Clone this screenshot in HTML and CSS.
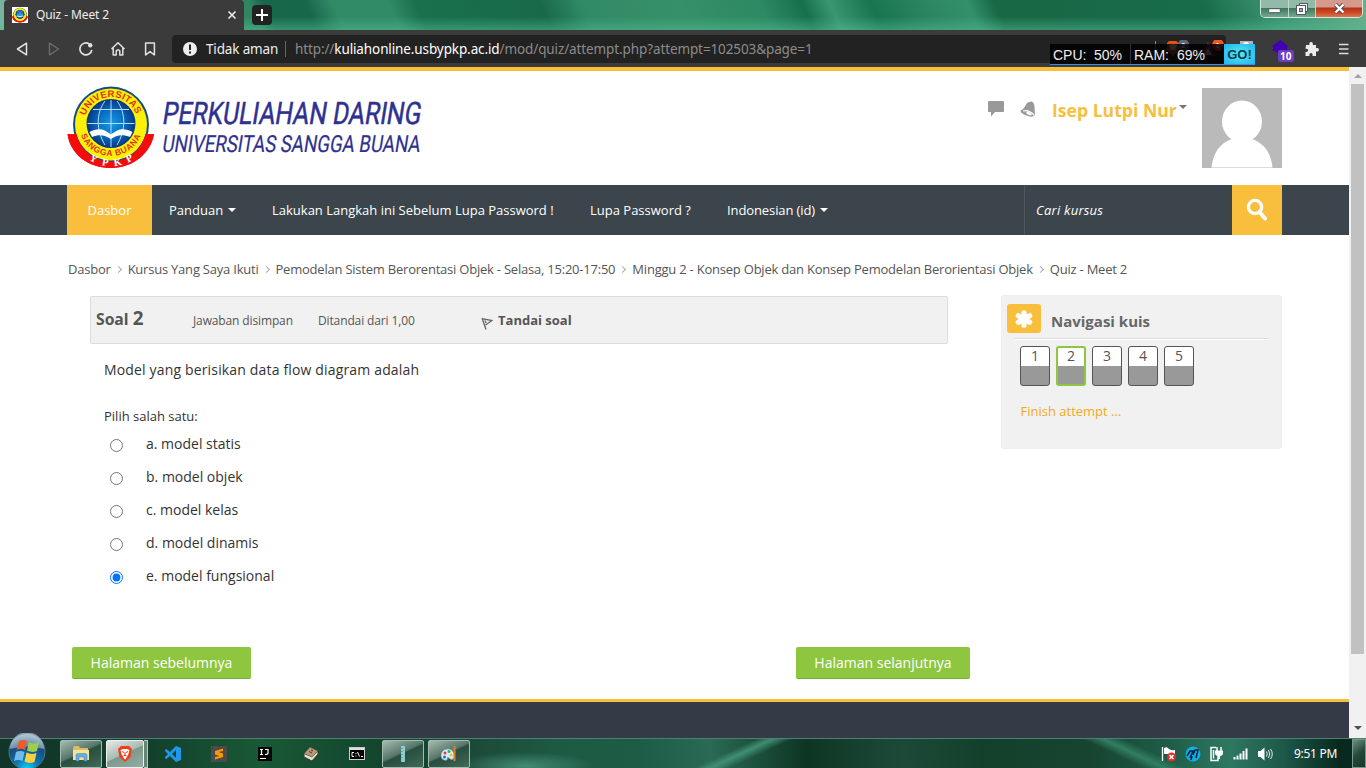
FILE: index.html
```html
<!DOCTYPE html>
<html lang="id">
<head>
<meta charset="utf-8">
<title>Quiz - Meet 2</title>
<link rel="stylesheet" href="styles.css">
</head>
<body>
<svg class="defs" width="0" height="0">
  <defs>
    <radialGradient id="globe"><stop offset="0" stop-color="#139be5"/><stop offset=".55" stop-color="#0870c4"/><stop offset="1" stop-color="#073a8a"/></radialGradient>
    <path id="arcTop" d="M18.300 30.700A27 27 0 0 1 69.700 30.700"/>
    <path id="arcBottom" d="M13.900 49.900A32 32 0 0 0 74.100 49.900"/>
    <path id="arcRibbon" d="M22 74.600A41 41 0 0 0 68 73.600"/>
    <symbol id="crest" viewBox="0 0 88 84">
      <path d="M.5 49 H13 C15 63 28 73 44 73 C59 73 71 63 74 49 H87 C84 68 66 83 44 83 C20 83 3 68 .5 49Z" fill="#f50b0c"/>
      <circle cx="44" cy="39.500" r="38" fill="#174a86"/>
      <circle cx="44" cy="39.500" r="36" fill="#fcf008"/>
      <path d="M.5 49 H9.500 C13 65 27 76.500 44 76.500 C60 76.500 74 66 78.500 49 H87 C84 68 66 83 44 83 C20 83 3 68 .5 49Z" fill="#f50b0c"/>
      <circle cx="44" cy="38.500" r="24.500" fill="#0a3c80"/>
      <circle cx="44" cy="38.500" r="23.500" fill="url(#globe)"/>
      <g fill="none" stroke="#b9def2" stroke-width="1"><path d="M44 15V62M20.500 38.500H67.500M26 24.500H62M38 16C29 28 29 45 38 60M50 16C59 28 59 45 50 60"/></g>
      <path d="M22.500 47 C31 42 38 44 44 49.500 C50 44 57 42 65.500 47 L63 52 C56 49 49 50 44 54 C38 50 32 49 25 52Z" fill="#fff"/>
    </symbol>
  </defs>
</svg>

<header class="titlebar">
  <div class="tab">
    <svg class="favicon" width="16" height="16" viewBox="0 0 88 88"><rect width="88" height="88" fill="#fff"/><use href="#crest" width="88" height="88"/></svg>
    <span class="tab-title">Quiz - Meet 2</span>
    <svg width="10" height="10" viewBox="0 0 10 10"><path d="M1.500 1.500L8.500 8.500M8.500 1.500L1.500 8.500" stroke="#eee" stroke-width="1.600"/></svg>
  </div>
  <div class="newtab"><svg width="12" height="12" viewBox="0 0 12 12"><path d="M6 0V12M0 6H12" stroke="#fff" stroke-width="2"/></svg></div>
  <div class="winbtns">
    <span class="wb"><svg class="min" width="13" height="6" viewBox="0 0 13 6"><rect x=".7" y=".7" width="11.600" height="4" rx="1" fill="#fff" stroke="#4f5563"/></svg></span>
    <span class="wb wb-max"><svg width="12" height="12" viewBox="0 0 12 12"><rect x="3.500" y=".5" width="8" height="8" fill="#eee" stroke="#555b68"/><rect x=".5" y="2.500" width="9" height="9" fill="#fff" stroke="#555b68"/><rect x="3.500" y="5.500" width="3" height="3" fill="#aaa" stroke="#555b68"/></svg></span>
    <span class="wb wb-close"><svg width="13" height="11" viewBox="0 0 13 11"><path d="M2.500 1.500L10.500 9.500M10.500 1.500L2.500 9.500" stroke="#574551" stroke-width="4.200"/><path d="M2.500 1.500L10.500 9.500M10.500 1.500L2.500 9.500" stroke="#fff" stroke-width="2.400"/></svg></span>
  </div>
</header>

<div class="toolbar">
  <div class="tools">
    <svg width="16" height="16" viewBox="0 0 16 16"><path d="M12.500 2.200L3.500 8L12.500 13.800Z" fill="none" stroke="#e2e2e2" stroke-width="1.500" stroke-linejoin="round"/></svg>
    <svg width="16" height="16" viewBox="0 0 16 16"><path d="M3.500 2.200L12.500 8L3.500 13.800Z" fill="none" stroke="#6b6b6b" stroke-width="1.400" stroke-linejoin="round"/></svg>
    <svg width="16" height="16" viewBox="0 0 16 16"><path d="M11 2.800A6 6 0 1 0 13.800 9" fill="none" stroke="#e2e2e2" stroke-width="1.700"/><circle cx="12.200" cy="4.200" r="2.200" fill="#e2e2e2"/></svg>
    <svg width="16" height="16" viewBox="0 0 16 16"><path d="M1.500 8L8 1.800L14.500 8M3.200 7V14H6.200V10Q8 7.500 9.800 10V14H12.800V7" fill="none" stroke="#e2e2e2" stroke-width="1.500" stroke-linejoin="round"/></svg>
    <svg width="16" height="16" viewBox="0 0 16 16"><path d="M3.600 2H12.400V14L8 10.600L3.600 14Z" fill="none" stroke="#e2e2e2" stroke-width="1.500" stroke-linejoin="round"/></svg>
  </div>
  <div class="address">
    <svg width="14" height="14" viewBox="0 0 14 14"><circle cx="7" cy="7" r="7" fill="#eee"/><path d="M7 2.500V8M7 9.500V11.500" stroke="#222" stroke-width="2"/></svg>
    <span class="insecure">Tidak aman</span>
    <span class="sep"></span>
    <span class="url">http://<b>kuliahonline.usbypkp.ac.id</b>/mod/quiz/attempt.php?attempt=102503&amp;page=1</span>
    <div class="shields">
      <span class="sep short"></span>
      <svg width="24" height="18" viewBox="0 0 24 18"><path d="M1 3L3 1H10L13 3V10L7 16L1 10Z" fill="#e9500c"/><path d="M3 5L7 4L11 5L9 10H5Z" fill="#fff"/><circle cx="17.500" cy="5" r="5.800" fill="#62677a"/><text x="15" y="8" class="badge-text">2</text></svg>
      <svg width="24" height="18" viewBox="0 0 24 18"><path d="M6 2L14 16H-2Z" fill="#8d2852"/><path d="M6 8L10 15H2Z" fill="#ddd"/><circle cx="16" cy="5" r="6" fill="#fb542b"/><text x="13.500" y="8" class="badge-text">1</text></svg>
    </div>
  </div>
  <div class="extensions">
    <svg width="16" height="16" viewBox="0 0 16 16"><rect x="1" width="13" height="14" fill="#aeb4bd"/><circle cx="7" cy="4" r="3" fill="#fff"/></svg>
    <svg class="stack-ext" width="24" height="24" viewBox="0 0 24 24"><path d="M9.500 1L17 7L15.500 9L17 11L9 15L1 11L3 9L1 7Z" fill="#4300ae"/><rect x="7" y="11" width="16" height="12" rx="2" fill="#6d3cc4"/><text x="9" y="21" class="ten">10</text></svg>
    <svg class="puzzle" width="16" height="16" viewBox="0 0 16 16"><path d="M2 4H5.500C4 0 10 0 8.800 4H12V7.200C16 6 16 11.500 12 10.500V15H8.500C9.500 11 4.500 11 5.500 15H1.500V11C5 11.500 5 7 1.500 8Z" fill="#ececec"/></svg>
    <svg class="menu" width="10" height="14" viewBox="0 0 10 14"><path d="M0 2.500H9.500M0 7H9.500M0 11.500H9.500" stroke="#ddd" stroke-width="1.500"/></svg>
  </div>
</div>

<div class="monitor"><span class="cell cpu"><i>CPU:</i><i>50%</i></span><span class="cell ram"><i>RAM:</i><i>69%</i></span><span class="go">GO!</span></div>

<div class="browser">
  <div class="page">
    <div class="masthead">
      <svg class="logo" width="370" height="90" viewBox="0 0 370 90">
        <use href="#crest" width="88" height="84"/>
        <text class="crest-ring"><textPath href="#arcTop" textLength="66">UNIVERSITAS</textPath></text>
        <text class="crest-ring small"><textPath href="#arcBottom" textLength="77">SANGGA BUANA</textPath></text>
        <text class="crest-yp"><textPath href="#arcRibbon" textLength="47">YPKP</textPath></text>
        <text class="logo-main" transform="translate(94.500 39.300) skewX(-9)" textLength="258.500" lengthAdjust="spacingAndGlyphs">PERKULIAHAN DARING</text>
        <text class="logo-sub" transform="translate(94.500 67.300) skewX(-9)" textLength="258" lengthAdjust="spacingAndGlyphs">UNIVERSITAS SANGGA BUANA</text>
      </svg>
      <div class="user">
        <svg class="chat" width="16" height="16" viewBox="0 0 16 16"><path d="M1 0H15Q16 0 16 1V10Q16 11 15 11H7L3 15.500V11H1Q0 11 0 10V1Q0 0 1 0Z" fill="#999"/></svg>
        <svg class="bell" width="17" height="17" viewBox="0 0 17 17"><path d="M7 2Q10 0 12 .5Q14.500 2 14.500 6L15 14Q12 17 6.500 14.500Q0 12 .5 9.500Q4 8 5.500 4.500Z" fill="#999"/><path d="M3 10Q9 8.500 14 14" fill="none" stroke="#fff" stroke-width="1.200"/><ellipse cx="9" cy="12.500" rx="3" ry="1.400" transform="rotate(25 9 12.500)" fill="#fff"/></svg>
        <span class="username">Isep Lutpi Nur</span><i class="caret dark"></i>
        <svg class="avatar" width="80" height="80" viewBox="0 0 80 80"><rect width="80" height="80" fill="#bababa"/><ellipse cx="40" cy="33.500" rx="20" ry="21" fill="#fff"/><path d="M9.500 79.500C11 65 18 55 30 51H50C62 55 69 65 70.500 79.500Z" fill="#fff"/></svg>
      </div>
    </div>
    <nav class="mainnav">
      <a class="active">Dasbor</a>
      <a class="n1"><span>Panduan</span><i class="caret"></i></a>
      <a class="n2"><span>Lakukan Langkah ini Sebelum Lupa Password !</span></a>
      <a class="n3"><span>Lupa Password ?</span></a>
      <a class="n4"><span>Indonesian (id)</span><i class="caret"></i></a>
      <div class="search">Cari kursus</div>
      <div class="search-btn"><svg width="22" height="24" viewBox="0 0 22 24"><circle cx="9" cy="9" r="6.600" fill="none" stroke="#fff" stroke-width="3.400"/><path d="M13.500 14L19 20.500" stroke="#fff" stroke-width="4" stroke-linecap="round"/></svg></div>
    </nav>
    <div class="crumbs">
      <span>Dasbor</span><i></i><span>Kursus Yang Saya Ikuti</span><i></i><span>Pemodelan Sistem Berorentasi Objek - Selasa, 15:20-17:50</span><i></i><span>Minggu 2 - Konsep Objek dan Konsep Pemodelan Berorientasi Objek</span><i></i><span>Quiz - Meet 2</span>
    </div>
    <main class="content">
      <section class="question">
        <div class="info">
          <h3>Soal <b>2</b></h3>
          <span class="state">Jawaban disimpan</span>
          <span class="grade">Ditandai dari 1,00</span>
          <svg class="flag" width="12" height="14" viewBox="0 0 12 14"><path d="M1 1L5 12.500M2 1.800L11 3.500L4.500 8M4 3.500L5 6" fill="none" stroke="#666" stroke-width="1.300"/></svg>
          <strong>Tandai soal</strong>
        </div>
        <p class="qtext">Model yang berisikan data flow diagram adalah</p>
        <p class="prompt">Pilih salah satu:</p>
        <label class="answer"><input type="radio" name="q"><span>a. model statis</span></label>
        <label class="answer"><input type="radio" name="q"><span>b. model objek</span></label>
        <label class="answer"><input type="radio" name="q"><span>c. model kelas</span></label>
        <label class="answer"><input type="radio" name="q"><span>d. model dinamis</span></label>
        <label class="answer"><input type="radio" name="q" checked><span>e. model fungsional</span></label>
        <div class="buttons"><button class="prev">Halaman sebelumnya</button><button class="next">Halaman selanjutnya</button></div>
      </section>
      <aside class="block">
        <div class="block-head">
          <span class="block-icon"><svg width="18" height="18" viewBox="0 0 18 18"><path d="M9 2.800V15.200M3.300 5.800L14.700 12.200M14.700 5.800L3.300 12.200" stroke="#fff" stroke-width="5.200" stroke-linecap="round"/></svg></span>
          <h2>Navigasi kuis</h2>
        </div>
        <div class="rule"></div>
        <div class="qn"><a>1</a><a class="current">2</a><a>3</a><a>4</a><a>5</a></div>
        <a class="finish">Finish attempt ...</a>
      </aside>
    </main>
    <footer class="footer"></footer>
  </div>
  <div class="scrollbar"><i class="up"></i><div class="thumb"></div><i class="down"></i></div>
</div>

<div class="taskbar">
  <svg class="orb" width="40" height="36" viewBox="0 0 40 36">
    <defs><radialGradient id="og" cx=".5" cy="1" r=".95"><stop offset="0" stop-color="#19d7fb"/><stop offset=".35" stop-color="#0a75b5"/><stop offset=".75" stop-color="#1b4a78"/><stop offset="1" stop-color="#86a7bd"/></radialGradient></defs>
    <circle cx="20" cy="18.500" r="18" fill="url(#og)" stroke="#51758a"/><path d="M3 16A17 17 0 0 1 37 16Q20 11 3 16Z" fill="#d8e8f1" opacity=".45"/>
    <path d="M12 8Q16 6 20 8L18 17Q14 14.500 9.500 17Z" fill="#f0592b"/><path d="M22 9Q27 12 32 9L30 18Q25 20 20 17.500Z" fill="#9bd04a"/><path d="M9 19Q13 17 17.500 19L15.500 28Q11 26 7 28Z" fill="#71bdea"/><path d="M19.500 19.500Q24 22 29.500 20L27.500 29Q22 31 17.500 28.500Z" fill="#fbd13f"/>
  </svg>
  <div class="task win explorer"><svg width="18" height="18" viewBox="0 0 18 18"><path d="M1 3L2 1H7L8 3H16V15H1Z" fill="#d9bd60"/><path d="M1 5H17V15H1Z" fill="#f6e39b"/><path d="M4 16V10Q4 8.500 6 8.500H13Q15 8.500 15 10V16H12V12H7V16Z" fill="#64afe0" stroke="#3b7fae" stroke-width=".5"/></svg></div>
  <div class="task win brave"><svg width="14" height="16" viewBox="0 0 14 16"><path d="M3 0H11L14 3L12.500 11L7 16L1.500 11L0 3Z" fill="#f73b16"/><path d="M2.500 4L5 3H9L11.500 4L10.500 8L8 12.500L7 13.500L6 12.500L3.500 8Z" fill="#fff"/><path d="M4 5.500L6 6.500M10 5.500L8 6.500M7 6V9M5.500 10L7 9L8.500 10" stroke="#f73b16"/></svg></div>
  <div class="task stack"></div>
  <div class="task icon"><svg width="16" height="16" viewBox="0 0 16 16"><path d="M11 0L16 2V14L11 16L5 10L1.500 13L0 12V11L3 8L0 5V4L1.500 3L5 6Z M11 4L7 8L11 12Z" fill="#2197e8" fill-rule="evenodd"/></svg></div>
  <div class="task icon"><svg width="16" height="16" viewBox="0 0 16 16"><rect width="16" height="16" fill="#4b4b4b"/><path d="M12 2.500L4 5V8.500L8.500 10L4 11V13.500L12 11V7.500L7.500 6L12 5Z" fill="#ff9800"/></svg></div>
  <div class="task icon"><svg width="14" height="14" viewBox="0 0 14 14"><rect width="14" height="14" fill="#050505"/><path d="M2 2.500H5M3.500 2.500V7.500M2 7.500H5M7 2.500H10V6Q10 7.500 7 7.500M2 11.500H8" fill="none" stroke="#fff" stroke-width="1.200"/></svg></div>
  <div class="task icon"><svg width="16" height="16" viewBox="0 0 16 16"><path d="M7 1L15 5V8L9 15L1 11V8Z" fill="#e8dfd5" stroke="#40352c"/><path d="M7 1L15 5L9 11L1 7.500Z" fill="#b39a7a" stroke="#4b3d30" stroke-width=".7"/><path d="M6 5.500L9 7M8 4L10 5" stroke="#4b3d30"/></svg></div>
  <div class="task icon"><svg width="16" height="14" viewBox="0 0 16 14"><rect x=".5" y=".5" width="15" height="12" fill="#000" stroke="#ccc"/><path d="M1 2H15" stroke="#ddd" stroke-width="2"/><path d="M5 5.500H3V9.500H5M7 6V7M7 8.500V9.500M8.500 5L10.500 9.500M12 9.500H14" fill="none" stroke="#fff"/></svg></div>
  <div class="task win w3"><svg width="4" height="16" viewBox="0 0 4 16"><rect width="4" height="16" fill="#8ccbd0"/><path d="M0 2.500H1.500M0 5.500H1.500M0 8.500H1.500M0 11.500H1.500" stroke="#3f8790" stroke-width=".7"/></svg></div>
  <div class="task win w4"><svg width="16" height="16" viewBox="0 0 16 16"><path d="M7 3C12 3 14 8 13 12Q11 15 8 12Q6 10 6 14Q0 15 0 9Q1 3 7 3Z" fill="#d6edf7" stroke="#75a8c2" stroke-width=".7"/><circle cx="4" cy="7" r="1.500" fill="#e43e34"/><circle cx="8" cy="5.500" r="1.500" fill="#42aa49"/><circle cx="3.500" cy="11" r="1.500" fill="#2c69ce"/><circle cx="10" cy="9" r="1.500" fill="#f1bf27"/><path d="M13.500 0V15" stroke="#e08128" stroke-width="2"/></svg></div>
  <div class="tray">
    <svg width="16" height="16" viewBox="0 0 16 16"><path d="M1.500 1V15" stroke="#fff" stroke-width="1.300"/><path d="M3 2Q6 0 8 3Q11 5 14 4V10Q9 11 7 8H3Z" fill="#fff"/><circle cx="10.500" cy="11" r="4.500" fill="#db3125"/><path d="M8.500 9L12.500 13M12.500 9L8.500 13" stroke="#fff" stroke-width="1.500"/></svg>
    <svg width="16" height="16" viewBox="0 0 16 16"><circle cx="8" cy="8" r="7.500" fill="#0caee8"/><path d="M2 10L5 5H8L5 12M8 9L10 4H13L11 12M7 10L6 14" fill="none" stroke="#08253d" stroke-width="1.500"/></svg>
    <svg width="16" height="16" viewBox="0 0 16 16"><path d="M7 1.500H2V14.500H9V10" fill="none" stroke="#fff" stroke-width="1.500"/><path d="M4.500 4V12.500" stroke="#fff" stroke-width="1.500"/><path d="M8 1V5M12 1V5" stroke="#fff" stroke-width="1.500"/><path d="M6 4.500H14V7Q14 9.500 11 10V13H9V10Q6 9.500 6 7Z" fill="#fff"/></svg>
    <svg width="16" height="16" viewBox="0 0 16 16"><path d="M1.500 11V13.500M4.500 9.500V13.500M7.500 7.500V13.500M10.500 5V13.500M13.500 2.500V13.500" stroke="#fff" stroke-width="2"/></svg>
    <svg width="16" height="16" viewBox="0 0 16 16"><path d="M1 5H3.500L7.500 1.500V14.500L3.500 11H1Z" fill="#fff"/><path d="M9.500 5.500Q11 8 9.500 10.500M11.500 4Q14 8 11.500 12M13.500 3Q17 8 13.500 13" fill="none" stroke="#e4eeea" stroke-width="1"/></svg>
    <time>9:51 PM</time>
    <span class="desktop-btn"></span>
  </div>
</div>
</body>
</html>
```
FILE: styles.css
```css
* { box-sizing: border-box; }
html, body { margin: 0; height: 100%; overflow: hidden; }
body { width: 1366px; height: 768px; display: flex; flex-direction: column; position: relative; font-family: "Open Sans", "Noto Sans", sans-serif; font-size: 13px; color: #555; background: #fff; }
svg { display: block; flex: none; }
.defs { position: absolute; }
i { font-style: normal; }

.titlebar { height: 30px; flex: none; display: flex; padding-left: 4px; background: linear-gradient(180deg, transparent 55%, rgba(82,190,147,.5)), linear-gradient(65deg, #7ab6a0 0, #2f8560 19%, #17674a 20%, #17674a 23%, #328b67 25%, #328b67 29%, #19704c 31%, #18694a 40%, #318a66 43%, #369069 50%, #2d8963 56%, #17704c 59%, #3a9670 61%, #197450 64%, #2d8662 68%, #33906a 71%, #186745 73%, #186c4a 88%, #3b9271 93%, #6dae8c 100%); }
.tab { width: 240px; height: 30px; background: #3b3b3b; border-radius: 4px 4px 0 0; display: flex; align-items: center; padding: 0 7px 0 8px; }
.tab-title { font: 12px/16px "Noto Sans", sans-serif; color: #eee; margin-left: 8px; flex: 1; letter-spacing: -.1px; }
.newtab { width: 20px; height: 20px; margin: 5px 0 0 8px; background: #222; border-radius: 4px; display: grid; place-items: center; }
.winbtns { margin-left: auto; margin-right: 3px; width: 103px; height: 18px; display: flex; border: 1px solid #d2e8df; border-top: 0; border-radius: 0 0 5px 5px; overflow: hidden; }
.wb { width: 28px; display: grid; place-items: center; background: linear-gradient(#93b9a8 45%, #3e795e 50%, #76a890); border-right: 1px solid #bfd9ce; }
.min { margin-top: 4px; }
.wb-max { width: 27px; }
.wb-close { width: 46px; border: 0; background: linear-gradient(#d69a8c 40%, #b73419 48%, #cf4a24 75%, #d87a57); }

.toolbar { height: 37px; flex: none; background: #3b3b3b; display: flex; align-items: center; padding: 0 17px 0 14px; }
.tools { display: flex; gap: 16px; width: 158px; }
.address { width: 1054px; height: 28px; background: #222; border-radius: 4px; display: flex; align-items: center; padding-left: 11px; font: 13.500px/20px "Noto Sans", sans-serif; white-space: nowrap; }
.insecure { color: #eee; width: 72px; margin-left: 9px; letter-spacing: -.15px; }
.sep { width: 1px; height: 16px; background: #666; margin: 0 9px 0 7px; }
.sep.short { background: #888; margin: 0 10px 0 0; }
.url { color: #8b8b8b; letter-spacing: -.11px; }
.url b { color: #fff; font-weight: 400; }
.shields { margin-left: auto; display: flex; align-items: center; gap: 0; }
.shields svg + svg { margin-left: 12px; }
.badge-text { font: bold 8px "Liberation Sans", sans-serif; fill: #fff; }
.extensions { flex: 1; display: flex; align-items: center; padding-left: 13px; }
.stack-ext { margin: 4px 0 0 16px; }
.puzzle { margin-left: 9px; }
.menu { margin-left: auto; }
.ten { font: bold 10px "Open Sans", sans-serif; fill: #fff; }

.monitor { position: absolute; z-index: 2; left: 1050px; top: 44px; width: 205px; height: 21px; display: flex; background: rgba(0,0,0,.85); border-bottom: 1px solid #2e91ed; color: #eee; font: 14px/23px "Liberation Sans", sans-serif; }
.cell { display: flex; justify-content: space-between; }
.cpu { width: 81px; padding: 0 8px 0 3px; border-right: 1px solid #333; }
.ram { width: 93px; padding: 0 19px 0 3px; }
.go { width: 31px; text-align: center; font-weight: bold; color: #083850; background: radial-gradient(#55eaf0, #1fb5ef); font-size: 13px; line-height: 22px; }

.browser { flex: 1; min-height: 0; display: flex; }
.page { width: 1349px; border-top: 4px solid #f9be3b; display: flex; flex-direction: column; }
.masthead { height: 114px; flex: none; padding: 14px 67px 0 67px; display: flex; justify-content: space-between; }
.crest-ring { font: bold 9.500px "Liberation Sans", sans-serif; fill: #e0301a; }
.crest-ring.small { font-size: 8.500px; }
.crest-yp { font: bold 10.500px "Liberation Serif", serif; fill: #fff; }
.logo-main { font: 31px Roboto, sans-serif; fill: #2e3190; stroke: #2e3190; stroke-width: .5px; }
.logo-sub { font: 23.500px Roboto, sans-serif; fill: #2e3190; stroke: #2e3190; stroke-width: .2px; }
.user { display: flex; align-items: flex-start; padding-top: 3px; }
.chat { margin: 13px 0 0; }
.bell { margin: 13px 0 0 16px; }
.username { width: 125px; margin: 9px 3px 0 15px; font-size: 17.600px; line-height: 26px; font-weight: 700; color: #f9be3b; white-space: nowrap; }
.caret { width: 8px; border: 4px solid transparent; border-top-color: #fff; border-bottom: 0; margin-left: 5px; }
.caret.dark { border-top-color: #777; margin: 17px 15px 0 -1px; }
.mainnav { height: 50px; flex: none; background: #3b454b; display: flex; padding-left: 67px; color: #fff; align-items: center; white-space: nowrap; }
.mainnav a { display: flex; align-items: center; }
.mainnav .active { width: 85px; height: 50px; justify-content: center; background: #f9be3b; }
.mainnav .n1 { width: 103px; margin-left: 17px; }
.n2 { width: 318px; }
.n3 { width: 137px; }
.n4 { width: 297px; letter-spacing: -.1px; }
.search { width: 208px; height: 50px; line-height: 50px; padding-left: 11px; border-left: 1px solid #4d575c; font-style: italic; letter-spacing: .25px; }
.search-btn { width: 50px; height: 50px; display: grid; place-items: center; background: #f9be3b; }

.crumbs { height: 60px; flex: none; padding: 9px 0 0 68px; line-height: 50px; display: flex; white-space: nowrap; letter-spacing: -.22px; }
.crumbs i { width: 5px; height: 5px; margin: 23px 7px 0 5px; border: solid #aaa; border-width: 1px 1px 0 0; transform: rotate(45deg); }
.content { height: 404px; flex: none; display: flex; align-items: flex-start; padding-left: 67px; }
.question { width: 934px; padding-top: 1px; color: #333; }
.info { width: 858px; height: 48px; margin-left: 23px; background: #f1f1f1; border: 1px solid #dcdcdc; border-radius: 2px; display: flex; align-items: center; padding-left: 5px; color: #555; white-space: nowrap; }
.info h3 { margin: 0; width: 97px; font-size: 15.700px; line-height: 24px; font-weight: 700; padding-bottom: 3px; }
.info h3 b { font-size: 18.800px; font-weight: 700; }
.state, .grade { font-size: 12px; width: 125px; letter-spacing: -.13px; }
.grade { width: 163px; }
.flag { margin-top: 8px; }
.info strong { margin-left: 5px; font-size: 13px; font-weight: 700; }
.qtext { margin: 16px 0 0 37px; font-size: 14px; line-height: 20px; letter-spacing: .16px; }
.prompt { margin: 26px 0 8px 37px; line-height: 20px; }
.answer { height: 33px; display: flex; padding-left: 43px; font-size: 14px; line-height: 20px; }
.answer input { width: 13px; height: 13px; margin: 5px 23px 0 0; }
.buttons { display: flex; justify-content: space-between; padding: 48px 31px 0 5px; }
.buttons button { height: 32px; border: 0; border-bottom: 1px solid #77ad31; border-radius: 2px; background: #8ec63f; color: #fff; font: 14px/20px "Open Sans", sans-serif; padding: 0; }
.prev { width: 179px; }
.next { width: 174px; }
.block { width: 281px; height: 154px; background: #f1f1f1; border: 1px solid #eee; border-radius: 3px; padding: 8px 5px; }
.block-head { display: flex; }
.block-icon { width: 34px; height: 29px; border-radius: 3px; background: #f9be3b; display: grid; place-items: center; }
.block h2 { margin: 4px 0 0 10px; font-size: 15px; line-height: 26px; font-weight: 700; color: #666; }
.rule { height: 2px; margin: 4px 7px 0; background: #fff; border-top: 1px solid #ddd; }
.qn { display: flex; gap: 6px; padding: 6px 0 0 13px; }
.qn a { width: 30px; height: 40px; border: 1px solid #555; border-radius: 3px; background: linear-gradient(#fff 19px, #999 19px); text-align: center; font-size: 14px; line-height: 18px; color: #555; }
.qn a.current { border: 2px solid #8ec63f; background: linear-gradient(#fff 18px, #999 18px); line-height: 16px; }
.finish { display: block; margin: 15px 0 0 13.500px; line-height: 20px; color: #f3a91e; }
.footer { flex: 1; background: #343a46; border-top: 3px solid #f9be3b; }
.scrollbar { width: 17px; background: #f1f1f1; display: flex; flex-direction: column; align-items: center; padding: 7px 0 8px; }
.up, .down { width: 8px; border: 4px solid transparent; border-bottom-color: #a3a3a3; border-top: 0; }
.down { border-top: 4px solid #505050; border-bottom: 0; margin-top: auto; }
.thumb { width: 13px; height: 570px; margin-top: 6px; background: #c1c1c1; }

.taskbar { height: 30px; flex: none; position: relative; border-top: 1px solid #4c8171; display: flex; background:
  radial-gradient(ellipse 70px 14px at 525px 27px, rgba(70,145,122,.9), transparent),
  linear-gradient(155deg, transparent 42%, rgba(66,144,118,.95) 50%, transparent 60%) 670px 0 / 140px 30px no-repeat,
  linear-gradient(205deg, transparent 38%, rgba(50,128,100,.95) 50%, transparent 62%) 1080px 0 / 110px 30px no-repeat,
  linear-gradient(90deg, #12352a 0, #123d2c 10%, #195936 19%, #12432c 29%, #1d4d3b 36%, #1d5a44 41%, #1d5c46 47%, #2a6a54 52%, #0e3524 59%, #1d4a38 66%, #12402b 72%, #174531 80%, #205f4a 86%, #2e7862 90%, #1d5848 94%, #08291f 98%); }
.orb { position: absolute; left: 7px; top: -6px; height: 36px; }
.task { height: 28px; margin-top: 1px; display: grid; place-items: center; }
.win { border: 1px solid #a3bbb1; border-radius: 2px; width: 42px; background: linear-gradient(155deg, #a8bab1 0, #567569 45%, #284e3d 50%, #416a58); }
.explorer { margin-left: 60px; }
.brave { width: 38px; margin-left: 4px; background: linear-gradient(155deg, #e5eae7, #a9bab1 48%, #7c998c 50%, #96ada2); border-color: #edf2f0; }
.stack { width: 4px; border: 1px solid #b7cbc2; border-left: 0; background: #678577; margin-right: 2px; }
.icon { width: 46px; }
.w3 { margin-left: 2px; }
.w4 { margin-left: 4px; }
.tray { margin-left: auto; display: flex; align-items: center; gap: 8px; color: #fff; }
.tray time { width: 50px; margin-left: 13px; font: 12px/16px "Noto Sans", sans-serif; white-space: nowrap; letter-spacing: -.3px; }
.desktop-btn { width: 14px; height: 29px; border: 1px solid #78988c; background: linear-gradient(140deg, #718f83, #24483a 50%, #17382c); }
```
